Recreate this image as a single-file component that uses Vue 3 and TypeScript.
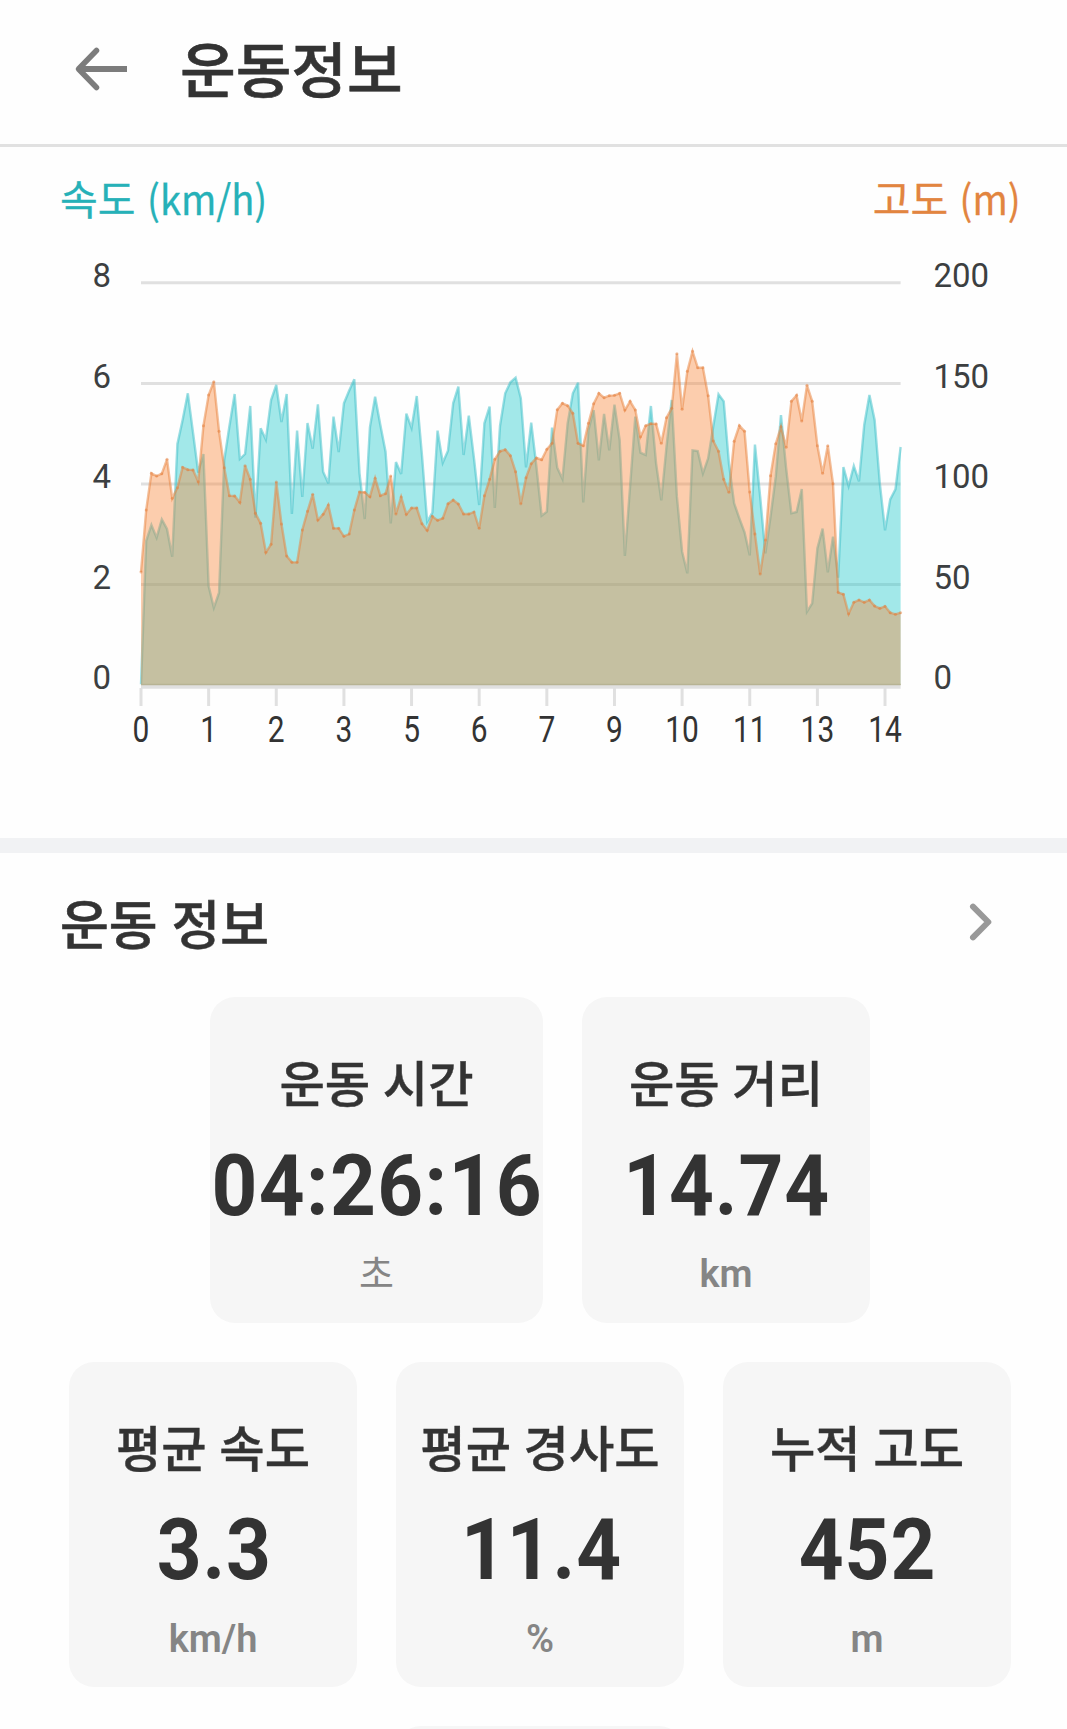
<script setup lang="ts">
interface Stat {
  label: string
  value: string
  unit: string
  wide?: boolean
}

const statRows: Stat[][] = [
  [
    { label: '운동 시간', value: '04:26:16', unit: '초', wide: true },
    { label: '운동 거리', value: '14.74', unit: 'km' },
  ],
  [
    { label: '평균 속도', value: '3.3', unit: 'km/h' },
    { label: '평균 경사도', value: '11.4', unit: '%' },
    { label: '누적 고도', value: '452', unit: 'm' },
  ],
]

// Samples are depths below the plot origin, in thirds of a pixel.
const speed: number[] = [
  1033, 603, 555, 593, 538, 567, 650, 312, 240, 160, 278, 398, 342, 738, 803, 758, 360, 258, 162, 357,
  342, 198, 533, 265, 299, 180, 135, 246, 162, 522, 272, 471, 249, 326, 193, 395, 430, 230, 336, 190,
  152, 118, 400, 537, 262, 170, 255, 335, 550, 366, 402, 221, 264, 168, 345, 545, 518, 272, 368, 332,
  190, 140, 345, 227, 355, 495, 250, 200, 504, 258, 160, 127, 113, 175, 382, 248, 380, 527, 515, 263,
  383, 417, 250, 160, 128, 487, 270, 210, 361, 222, 331, 194, 300, 648, 440, 230, 338, 345, 198, 370,
  481, 320, 180, 470, 635, 700, 331, 333, 400, 355, 258, 163, 184, 370, 490, 535, 577, 646, 314, 470,
  640, 530, 410, 225, 385, 520, 516, 447, 815, 790, 625, 566, 697, 590, 713, 381, 438, 378, 424, 255,
  165, 240, 430, 571, 478, 448, 321,
]
const altitude: number[] = [
  696, 510, 400, 408, 401, 358, 475, 443, 382, 389, 390, 425, 257, 165, 125, 274, 383, 467, 468, 487,
  377, 418, 520, 550, 637, 613, 426, 552, 648, 667, 667, 570, 514, 463, 540, 523, 495, 565, 565, 589,
  582, 510, 456, 457, 470, 415, 467, 461, 408, 522, 471, 523, 504, 504, 551, 571, 529, 541, 535, 491,
  480, 492, 522, 522, 516, 565, 467, 418, 358, 334, 329, 347, 395, 491, 413, 371, 354, 359, 328, 310,
  209, 190, 197, 220, 310, 317, 250, 191, 160, 173, 167, 166, 160, 210, 184, 210, 290, 257, 251, 252,
  310, 233, 205, 41, 208, 94, 34, 83, 83, 167, 303, 334, 418, 457, 304, 257, 274, 456, 582, 702,
  600, 407, 311, 260, 322, 184, 166, 243, 136, 184, 317, 400, 317, 431, 757, 763, 821, 787, 780, 787,
  780, 798, 805, 799, 818, 823, 818,
]

const left = 141
const right = 900.6
const base = 445
const origin = 100
const step = 5.203

const px = (i: number) => +(left + i * step).toFixed(2)
const py = (v: number) => +(origin + v / 3).toFixed(2)
const line = (s: number[]) => s.map((v, i) => `${px(i)},${py(v)}`).join(' ')
const area = (s: number[]) => `${left},${base} ${line(s)} ${right},${base}`

const gridY = [42.8, 143.4, 244, 344.4]
const yLabels = [
  { y: 47, speed: '8', alt: '200' },
  { y: 147.7, speed: '6', alt: '150' },
  { y: 248, speed: '4', alt: '100' },
  { y: 348.7, speed: '2', alt: '50' },
  { y: 448.6, speed: '0', alt: '0' },
]
const xLabels = ['0', '1', '2', '3', '5', '6', '7', '9', '10', '11', '13', '14']
</script>

<template>
  <div class="screen">
    <header class="header">
      <svg class="back" width="60" height="48" viewBox="0 0 60 48">
        <path d="M56 24H9" />
        <path class="head" d="M25.5 5.5L7.5 24L25.5 42.5" />
      </svg>
      <h1>운동정보</h1>
    </header>

    <section class="chart">
      <div class="legend">
        <span class="speed">속도 <i>(km/h)</i></span>
        <span class="alt">고도 <i>(m)</i></span>
      </div>
      <svg class="plot" width="1067" height="598" viewBox="0 0 1067 598">
        <g class="grid">
          <path v-for="y in gridY" :key="y" :d="`M141 ${y}H900.6`" />
          <path class="axis" d="M141 446.8H900.6" />
          <path v-for="(l, i) in xLabels" :key="l" :d="`M${px(i * 13)} 448V466`" />
        </g>
        <polygon class="speed-area" :points="area(speed)" />
        <polyline class="speed-line" :points="line(speed)" />
        <polygon class="alt-area" :points="area(altitude)" />
        <polyline class="alt-line" :points="line(altitude)" />
        <circle v-for="(v, i) in altitude" :key="i" class="dot" :cx="px(i)" :cy="py(v)" r="1.5" />
        <path class="base" d="M141 444.5H900.6" />
        <g class="y-labels">
          <template v-for="l in yLabels" :key="l.y">
            <text class="end" x="111" :y="l.y">{{ l.speed }}</text>
            <text x="933.5" :y="l.y">{{ l.alt }}</text>
          </template>
        </g>
        <g class="x-labels">
          <text
            v-for="(l, i) in xLabels"
            :key="l"
            :transform="`translate(${px(i * 13)} 501.5) scale(0.82 1)`"
          >{{ l }}</text>
        </g>
      </svg>
    </section>

    <section class="info">
      <div class="info-head">
        <h2>운동 정보</h2>
        <svg width="28" height="42" viewBox="0 0 28 42">
          <path d="M6 5.7L21.3 21L6 36.3" />
        </svg>
      </div>
      <div class="rows">
        <div v-for="(row, r) in statRows" :key="r" class="row">
          <article v-for="s in row" :key="s.label" class="card" :class="{ wide: s.wide }">
            <div class="label">{{ s.label }}</div>
            <div class="value"><span>{{ s.value }}</span></div>
            <div class="unit">{{ s.unit }}</div>
          </article>
        </div>
        <div class="row"><article class="card"></article></div>
      </div>
    </section>
  </div>
</template>

<style>
body {
  margin: 0;
  background: #fefefe;
}
</style>

<style scoped>
.screen {
  width: 1067px;
  height: 1729px;
  overflow: hidden;
  display: flex;
  flex-direction: column;
  background: #fefefe;
  color: #333;
  font-family: Roboto, "Noto Sans CJK KR", sans-serif;
}
.header {
  box-sizing: border-box;
  flex: none;
  height: 147px;
  border-bottom: 3px solid #e1e1e1;
  display: flex;
  align-items: flex-start;
  padding: 23px 0 0 71px;
}
.back {
  margin-top: 22px;
  fill: none;
  stroke: #7c7c7c;
  stroke-width: 6;
}
.head {
  stroke-width: 5.5;
  stroke-linecap: round;
  stroke-linejoin: round;
}
h1,
h2 {
  margin: 0;
  font-family: "Noto Sans CJK KR", sans-serif;
  font-weight: 500;
  -webkit-text-stroke: 0.6px #333;
}
h1 {
  margin-left: 49px;
  font-size: 60.5px;
  line-height: 88px;
}
.chart {
  flex: none;
  height: 691px;
  border-bottom: 15px solid #f1f2f4;
}
.legend {
  display: flex;
  justify-content: space-between;
  height: 60px;
  padding: 20px 46px 13px 60px;
  font: 400 41px/60px "Noto Sans CJK KR", sans-serif;
  -webkit-text-stroke: 0.3px currentColor;
}
.legend i {
  display: inline-block;
  margin-left: 2px;
  font-style: normal;
  transform: scaleX(0.93);
  transform-origin: left;
}
.legend .alt i {
  margin-left: -2px;
  transform-origin: right;
}
.speed {
  color: #26b1b8;
}
.alt {
  color: #e2853f;
}
.plot {
  display: block;
}
.grid path {
  fill: none;
  stroke: #e0e0e0;
  stroke-width: 3;
}
.grid .axis {
  stroke-width: 4;
}
.speed-area {
  fill: rgba(25, 200, 203, 0.4);
}
.alt-area {
  fill: rgba(250, 132, 52, 0.4);
}
.speed-line,
.alt-line {
  fill: none;
  stroke-width: 2.4;
}
.speed-line {
  stroke: rgba(60, 190, 200, 0.5);
}
.alt-line {
  stroke: rgba(232, 130, 60, 0.5);
}
.dot {
  fill: rgba(226, 120, 50, 0.45);
}
.base {
  stroke: #b7b394;
  stroke-width: 1.6;
}
.y-labels {
  fill: #3c3f41;
  font: 400 33px Roboto, sans-serif;
}
.end {
  text-anchor: end;
}
.x-labels {
  fill: #333;
  font: 400 36.5px Roboto, sans-serif;
  text-anchor: middle;
}
.info-head {
  display: flex;
  justify-content: space-between;
  align-items: center;
  height: 144px;
  padding: 0 72px 0 60px;
}
.info-head svg {
  margin-bottom: 6px;
  fill: none;
  stroke: #999;
  stroke-width: 6;
  stroke-linecap: round;
  stroke-linejoin: round;
}
h2 {
  margin-bottom: 6px;
  font-size: 53px;
  line-height: 76px;
  word-spacing: 2px;
}
.rows {
  display: flex;
  flex-direction: column;
  gap: 39px;
  padding-left: 13px;
}
.row {
  display: flex;
  justify-content: center;
  gap: 39px;
}
.card {
  box-sizing: border-box;
  width: 288px;
  height: 325.5px;
  padding-top: 48px;
  border-radius: 25px;
  background: #f6f6f6;
  text-align: center;
  white-space: nowrap;
}
.wide {
  width: 333px;
}
.label {
  font: 500 49.3px/72px "Noto Sans CJK KR", sans-serif;
  word-spacing: 1.5px;
  -webkit-text-stroke: 0.4px #333;
}
.value {
  display: flex;
  justify-content: center;
  height: 100px;
  margin-top: 18.5px;
  font-weight: 700;
  font-size: 86px;
  line-height: 100px;
}
.value span {
  margin-right: -2px;
  transform: scaleX(0.91);
  letter-spacing: 1px;
}
.wide .value span {
  transform: scaleX(0.93);
  letter-spacing: 1.5px;
}
.unit {
  margin-top: 13.5px;
  color: #858585;
  font-weight: 600;
  font-size: 38px;
  line-height: 50px;
}
.wide .unit {
  font-weight: 400;
}
</style>
